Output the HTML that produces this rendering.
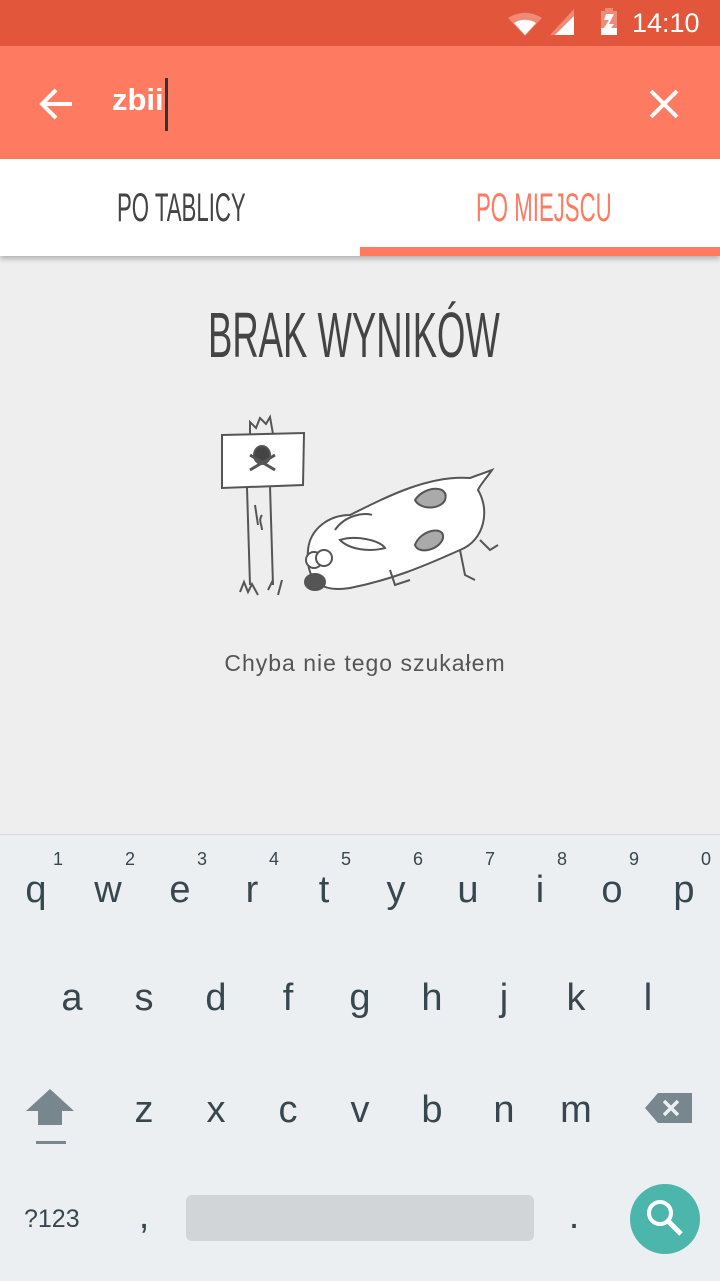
<!DOCTYPE html>
<html><head><meta charset="utf-8"><style>
*{margin:0;padding:0;box-sizing:border-box}
body{width:720px;height:1280px;overflow:hidden;background:#eeeeee;font-family:"Liberation Sans",sans-serif;position:relative}
.sb{position:absolute;top:0;left:0;width:720px;height:46px;background:#e2563b}
.ab{position:absolute;top:46px;left:0;width:720px;height:113px;background:#fe7a61}
.tabs{position:absolute;top:159px;left:0;width:720px;height:97px;background:#fff;box-shadow:0 3px 5px rgba(0,0,0,.25)}
.cond{position:absolute;white-space:nowrap;transform-origin:0 0;font-weight:normal}
.kb{position:absolute;top:834px;left:0;width:720px;height:446px;background:#eceff1;border-top:1px solid #d6d9db}
.k{position:absolute;font-size:38px;color:#37474f;width:72px;text-align:center}
.n{position:absolute;font-size:18px;color:#37474f;width:20px;text-align:center}
</style></head><body>
<div class="sb">
<svg width="720" height="46" style="position:absolute;left:0;top:0">
<path d="M508 18 A30 30 0 0 1 542 18 L525 36 Z" fill="#ee8a76"/>
<path d="M514 23 A20 20 0 0 1 536 23 L525 35 Z" fill="#fff"/>
<path d="M574 9 L574 35 L550 35 Z" fill="#ee8a76"/>
<path d="M574 16 L574 35 L555 35 Z" fill="#fff"/>
<rect x="601" y="11" width="16" height="24" fill="#ee8a76"/>
<rect x="605" y="8" width="8" height="4" fill="#ee8a76"/>
<path d="M601 28 L617 28 L617 35 L601 35 Z M606 14 L614 14 L609 24 L614 24 L611 28 L604 28 L609 20 L604 20Z" fill="#fff"/>
<text x="632" y="32" font-size="27" fill="#fff" font-family="Liberation Sans">14:10</text>
</svg></div>
<div class="ab">
<svg width="720" height="113" style="position:absolute;left:0;top:0">
<path d="M72 58 H42 M56 44 L42 58 L56 72" stroke="#fff" stroke-width="4" fill="none"/>
<path d="M651 45 L677 71 M677 45 L651 71" stroke="#fff" stroke-width="4"/>
<rect x="165" y="32" width="3" height="53" fill="#333"/>
</svg>
<div style="position:absolute;left:112px;top:36px;font-size:31px;color:#fff;font-weight:bold">zbii</div>
</div>
<div class="tabs">
<div class="cond" style="left:117px;top:27px;font-size:40px;color:#444;transform:scaleX(.555)">PO TABLICY</div>
<div class="cond" style="left:476px;top:27px;font-size:40px;color:#fe7a61;transform:scaleX(.555)">PO MIEJSCU</div>
<div style="position:absolute;left:360px;top:88px;width:360px;height:9px;background:#fe7a61"></div>
</div>
<div class="cond" style="left:208px;top:298px;font-size:64px;color:#444;transform:scaleX(.57)">BRAK WYNIKÓW</div>
<svg width="720" height="220" style="position:absolute;left:0;top:400px" fill="none" stroke="#555" stroke-width="2">
<path d="M222 35 L304 33 L303 85 L222 88 Z" fill="#fff"/>
<path d="M250 35 L250 22 L256 28 L260 18 L266 24 L270 17 L273 34"/>
<path d="M247 88 L250 185 M270 86 L273 185"/>
<path d="M240 192 L244 182 L248 192 L252 184 L258 195 M268 190 L273 180 M278 195 L282 180"/>
<path d="M255 105 L258 125 M262 115 C258 120 262 125 262 130"/>
<ellipse cx="262" cy="55" rx="8" ry="9" fill="#444"/>
<path d="M250 70 L275 55 M250 55 L275 70" stroke-width="3"/>
<path d="M308 150 C310 128 330 115 350 115 C390 95 430 75 470 78 L492 70 C485 80 480 85 478 90 C490 110 485 140 460 150 C420 168 390 180 350 188 C325 192 305 185 308 150 Z" fill="#fff"/>
<path d="M335 130 C345 115 365 112 372 115" fill="#fff"/>
<path d="M340 140 C355 135 380 140 385 148 C370 152 350 150 340 140Z"/>
<path d="M415 100 C425 85 450 85 445 100 C440 110 420 110 415 100Z" fill="#aaa"/>
<path d="M415 145 C420 130 445 125 443 138 C440 150 418 155 415 145Z" fill="#aaa"/>
<circle cx="314" cy="160" r="8" fill="#fff"/><circle cx="324" cy="158" r="8" fill="#fff"/>
<ellipse cx="315" cy="182" rx="10" ry="8" fill="#555"/>
<path d="M390 170 L395 185 L410 180 M460 150 L465 175 L475 180 M480 140 L490 150 L498 145"/>
</svg>
<div style="position:absolute;left:0;width:730px;top:650px;text-align:center;font-size:23px;letter-spacing:1px;color:#555">Chyba nie tego szukałem</div>
<div class="kb">
<div class="n" style="left:48px;top:14px">1</div><div class="n" style="left:120px;top:14px">2</div><div class="n" style="left:192px;top:14px">3</div><div class="n" style="left:264px;top:14px">4</div><div class="n" style="left:336px;top:14px">5</div><div class="n" style="left:408px;top:14px">6</div><div class="n" style="left:480px;top:14px">7</div><div class="n" style="left:552px;top:14px">8</div><div class="n" style="left:624px;top:14px">9</div><div class="n" style="left:696px;top:14px">0</div>
<div class="k" style="left:0;top:34px">q</div><div class="k" style="left:72px;top:34px">w</div><div class="k" style="left:144px;top:34px">e</div><div class="k" style="left:216px;top:34px">r</div><div class="k" style="left:288px;top:34px">t</div><div class="k" style="left:360px;top:34px">y</div><div class="k" style="left:432px;top:34px">u</div><div class="k" style="left:504px;top:34px">i</div><div class="k" style="left:576px;top:34px">o</div><div class="k" style="left:648px;top:34px">p</div>
<div class="k" style="left:36px;top:142px">a</div><div class="k" style="left:108px;top:142px">s</div><div class="k" style="left:180px;top:142px">d</div><div class="k" style="left:252px;top:142px">f</div><div class="k" style="left:324px;top:142px">g</div><div class="k" style="left:396px;top:142px">h</div><div class="k" style="left:468px;top:142px">j</div><div class="k" style="left:540px;top:142px">k</div><div class="k" style="left:612px;top:142px">l</div>
<div class="k" style="left:108px;top:254px">z</div><div class="k" style="left:180px;top:254px">x</div><div class="k" style="left:252px;top:254px">c</div><div class="k" style="left:324px;top:254px">v</div><div class="k" style="left:396px;top:254px">b</div><div class="k" style="left:468px;top:254px">n</div><div class="k" style="left:540px;top:254px">m</div>
<svg width="720" height="446" style="position:absolute;left:0;top:0">
<path d="M50 254 L74 276 L62 276 L62 290 L38 290 L38 276 L26 276 Z" fill="#78868d"/>
<rect x="36" y="306" width="30" height="3" fill="#78868d"/>
<path d="M658 258 L692 258 L692 288 L658 288 L645 273 Z" fill="#78868d"/>
<path d="M664 266 L678 280 M678 266 L664 280" stroke="#eceff1" stroke-width="3.5"/>
<rect x="186" y="360" width="348" height="46" rx="6" fill="#d1d5d8"/>
<circle cx="665" cy="384" r="35" fill="#4db6ac"/>
<circle cx="660" cy="378" r="11" stroke="#fff" stroke-width="4" fill="none"/>
<path d="M668 386 L681 399" stroke="#fff" stroke-width="5"/>
</svg>
<div style="position:absolute;left:24px;top:370px;font-size:25px;color:#37474f">?123</div>
<div class="k" style="left:108px;top:360px">,</div>
<div class="k" style="left:538px;top:360px">.</div>
</div>
</body></html>
